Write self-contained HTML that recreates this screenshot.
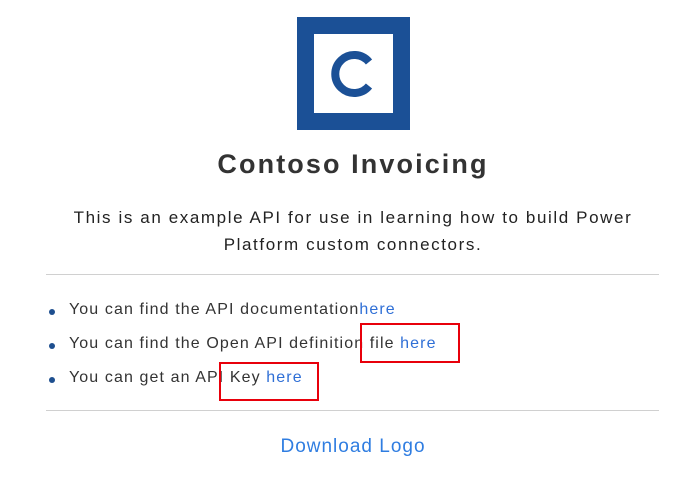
<!DOCTYPE html>
<html><head><style>
body{margin:0;width:698px;height:495px;background:#fff;font-family:"Liberation Sans",sans-serif;color:#333;position:relative;overflow:hidden}
.a{position:absolute;white-space:nowrap}
a{color:#2f6fd6;text-decoration:none}
.hr{position:absolute;left:46px;width:613px;height:1px;background:#d0d0d0}
.dot{position:absolute;left:49px;width:6px;height:6px;border-radius:50%;background:#1e4f8f}
.li{position:absolute;left:69px;font-size:16px;letter-spacing:1.1px;color:#333;white-space:nowrap}
.box{position:absolute;border:2px solid #e8000b}
</style></head><body>
<div class="a" style="left:297px;top:17px;width:113px;height:113px;background:#1b5096"></div>
<div class="a" style="left:314px;top:34px;width:79px;height:79px;background:#fff"></div>
<svg class="a" style="left:314px;top:34px" width="79" height="79" viewBox="0 0 79 79"><path d="M55 28 A19 19 0 1 0 55 52" fill="none" stroke="#1b5096" stroke-width="8"/></svg>
<div class="a" style="left:0;width:706px;text-align:center;top:149px;font-size:27px;letter-spacing:2.1px;font-weight:bold;color:#333">Contoso Invoicing</div>
<div class="a" style="left:0;width:706px;text-align:center;top:204px;font-size:17px;letter-spacing:1.6px;line-height:27px;color:#222">This is an example API for use in learning how to build Power<br>Platform custom connectors.</div>
<div class="hr" style="top:274px"></div>
<div class="dot" style="top:309px"></div>
<div class="li" style="top:301px">You can find the API documentation<a>here</a></div>
<div class="dot" style="top:343px"></div>
<div class="li" style="top:335px">You can find the Open API definition file <a>here</a></div>
<div class="dot" style="top:377px"></div>
<div class="li" style="top:369px">You can get an API Key <a>here</a></div>
<div class="box" style="left:360px;top:323px;width:96px;height:36px"></div>
<div class="box" style="left:219px;top:362px;width:96px;height:35px"></div>
<div class="hr" style="top:410px"></div>
<div class="a" style="left:0;width:706px;text-align:center;top:436px;font-size:19px;letter-spacing:1px;color:#2f7de1">Download Logo</div>
</body></html>
